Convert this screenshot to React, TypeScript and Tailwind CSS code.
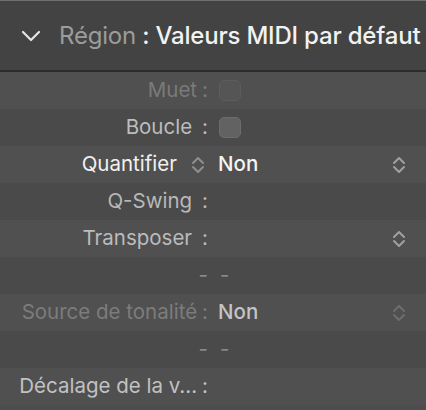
import React from "react";

const Updown = ({ color = "#9a9a9a" }: { color?: string }) => (
  <svg width="14" height="18" viewBox="0 0 14 18" fill="none">
    <path d="M2 7 L7 2 L12 7" stroke={color} strokeWidth="2" strokeLinecap="round" strokeLinejoin="round" />
    <path d="M2 11 L7 16 L12 11" stroke={color} strokeWidth="2" strokeLinecap="round" strokeLinejoin="round" />
  </svg>
);

const Checkbox = ({ dim }: { dim?: boolean }) => (
  <div
    className={
      dim
        ? "w-[22px] h-[21px] rounded-[5px] bg-[#555555] border border-[#5c5c5c]"
        : "w-[22px] h-[21px] rounded-[5px] bg-[#626262] border border-[#6c6c6c]"
    }
  />
);

const Row = ({
  light,
  children,
}: {
  light: boolean;
  children: React.ReactNode;
}) => (
  <div className={(light ? "bg-[#505050]" : "bg-[#4a4a4a]") + " h-[37px] flex items-center"}>{children}</div>
);

const Label = ({ children, color }: { children: React.ReactNode; color: string }) => (
  <div className="w-[208px] flex justify-end items-center shrink-0 whitespace-nowrap" style={{ color }}>
    {children}
  </div>
);

export default function App() {
  return (
    <div
      className="w-[426px] h-[410px] bg-[#4d4d4d] overflow-hidden text-[20.5px]"
      style={{ fontFamily: "Inter, 'Liberation Sans', sans-serif" }}
    >
      <div className="h-[70px] bg-[#434343] border-t border-t-[#707070] flex items-center">
        <div className="w-[59px] flex justify-center pl-[2px]">
          <svg width="22" height="14" viewBox="0 0 22 14" fill="none">
            <path d="M3 3 L11 11 L19 3" stroke="#e6e6e6" strokeWidth="2.2" strokeLinecap="round" strokeLinejoin="round" />
          </svg>
        </div>
        <div className="text-[24px] whitespace-nowrap tracking-[-0.2px]">
          <span className="text-[#9c9c9c]">Région</span>
          <span className="text-[#f2f2f2] font-medium"> : Valeurs MIDI par défaut</span>
        </div>
      </div>
      <div className="h-[2px] bg-[#2b2b2b]" />
      <Row light>
        <Label color="#7a7a7a">
          <span>Muet</span>
          <span className="ml-[5px]">:</span>
        </Label>
        <div className="ml-[11px]">
          <Checkbox dim />
        </div>
      </Row>
      <Row light={false}>
        <Label color="#bdbdbd">
          <span>Boucle</span>
          <span className="ml-[10px]">:</span>
        </Label>
        <div className="ml-[11px]">
          <Checkbox />
        </div>
      </Row>
      <Row light>
        <Label color="#f0f0f0">
          <span>Quantifier</span>
          <span className="ml-[14px] mr-[3px] flex">
            <Updown color="#8f8f8f" />
          </span>
        </Label>
        <div className="ml-[10px] flex-1 flex items-center justify-between pr-[20px]">
          <span className="text-[#f4f4f4] font-medium">Non</span>
          <Updown color="#a0a0a0" />
        </div>
      </Row>
      <Row light={false}>
        <Label color="#b8b8b8">
          <span>Q-Swing</span>
          <span className="ml-[10px]">:</span>
        </Label>
      </Row>
      <Row light>
        <Label color="#bcbcbc">
          <span>Transposer</span>
          <span className="ml-[10px]">:</span>
        </Label>
        <div className="ml-[10px] flex-1 flex items-center justify-end pr-[20px]">
          <Updown color="#a0a0a0" />
        </div>
      </Row>
      <Row light={false}>
        <div className="w-full flex justify-center pl-[2px] text-[#8a8a8a] gap-[12px]">
          <span>-</span>
          <span>-</span>
        </div>
      </Row>
      <Row light>
        <Label color="#7c7c7c">
          <span>Source de tonalité</span>
          <span className="ml-[5px]">:</span>
        </Label>
        <div className="ml-[10px] flex-1 flex items-center justify-between pr-[20px]">
          <span className="text-[#c4c4c4] font-medium">Non</span>
          <Updown color="#6e6e6e" />
        </div>
      </Row>
      <Row light={false}>
        <div className="w-full flex justify-center pl-[2px] text-[#8a8a8a] gap-[12px]">
          <span>-</span>
          <span>-</span>
        </div>
      </Row>
      <Row light>
        <Label color="#c2c2c2">
          <span>Décalage de la v...</span>
          <span className="ml-[5px]">:</span>
        </Label>
      </Row>
    </div>
  );
}
